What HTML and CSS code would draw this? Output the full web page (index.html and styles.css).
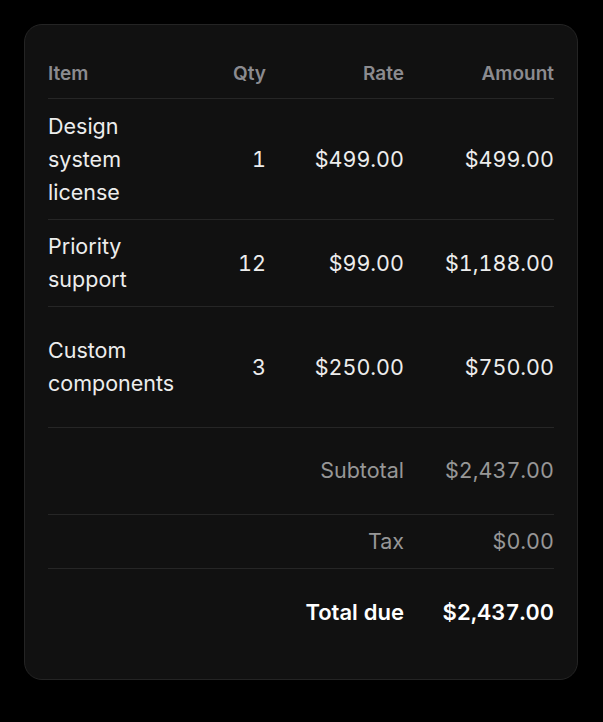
FILE: index.html
```html
<!DOCTYPE html>
<html lang="en">
<head>
  <meta charset="UTF-8">
  <meta name="viewport" content="width=device-width, initial-scale=1.0">
  <title>Invoice</title>
  <link rel="stylesheet" href="styles.css">
</head>
<body>
  <div class="card">
    <table class="invoice">
      <colgroup>
        <col class="col-item">
        <col class="col-qty">
        <col class="col-rate">
        <col class="col-amount">
      </colgroup>
      <thead>
        <tr>
          <th class="left">Item</th>
          <th>Qty</th>
          <th>Rate</th>
          <th>Amount</th>
        </tr>
      </thead>
      <tbody>
        <tr class="first">
          <td class="left">Design system license</td>
          <td>1</td>
          <td>$499.00</td>
          <td>$499.00</td>
        </tr>
        <tr>
          <td class="left">Priority support</td>
          <td>12</td>
          <td>$99.00</td>
          <td>$1,188.00</td>
        </tr>
        <tr class="tall">
          <td class="left">Custom components</td>
          <td>3</td>
          <td>$250.00</td>
          <td>$750.00</td>
        </tr>
      </tbody>
      <tfoot>
        <!-- totals -->
        <tr class="sum tall">
          <td colspan="3">Subtotal</td>
          <td>$2,437.00</td>
        </tr>
        <tr class="sum">
          <td colspan="3">Tax</td>
          <td>$0.00</td>
        </tr>
        <tr class="total tall">
          <td colspan="3">Total due</td>
          <td>$2,437.00</td>
        </tr>
      </tfoot>
    </table>
  </div>
</body>
</html>
```

FILE: styles.css
```css
body {
  margin: 0;
  background-color: #000;
  font-family: Inter, "Liberation Sans", sans-serif;
}

.card {
  width: 506px;
  margin: 24px;
  padding: 23px;
  background-color: #111111;
  border: 1px solid #242424;
  border-radius: 18px;
}

.invoice {
  width: 506px;
  table-layout: fixed;
  border-collapse: separate;
  border-spacing: 0;
  font-variant-numeric: tabular-nums;
}

.col-item { width: 136px; }
.col-qty { width: 82px; }
.col-rate { width: 138px; }
.col-amount { width: 150px; }

.invoice th,
.invoice td {
  text-align: right;
  vertical-align: middle;
  padding: 0;
}

.invoice .left {
  text-align: left;
}

.invoice th {
  font-size: 19px;
  font-weight: 600;
  line-height: 26px;
  color: #8b8b8f;
  padding: 13px 0 11px;
  border-bottom: 1px solid #262626;
}

.invoice td {
  font-size: 21.5px;
  line-height: 33px;
  color: #ededed;
  padding: 10px 0;
  border-bottom: 1px solid #262626;
}

.invoice tr.first td {
  padding: 11px 0 10px;
}

.invoice tr.tall td {
  padding: 27px 0;
}

.invoice tr.sum td {
  color: #979797;
}

.invoice tr.sum.tall td {
  padding: 26px 0 27px;
}

.invoice tr.total td {
  color: #fff;
  font-weight: 600;
  font-size: 22px;
  border-bottom: none;
  padding: 27px 0;
}
```
